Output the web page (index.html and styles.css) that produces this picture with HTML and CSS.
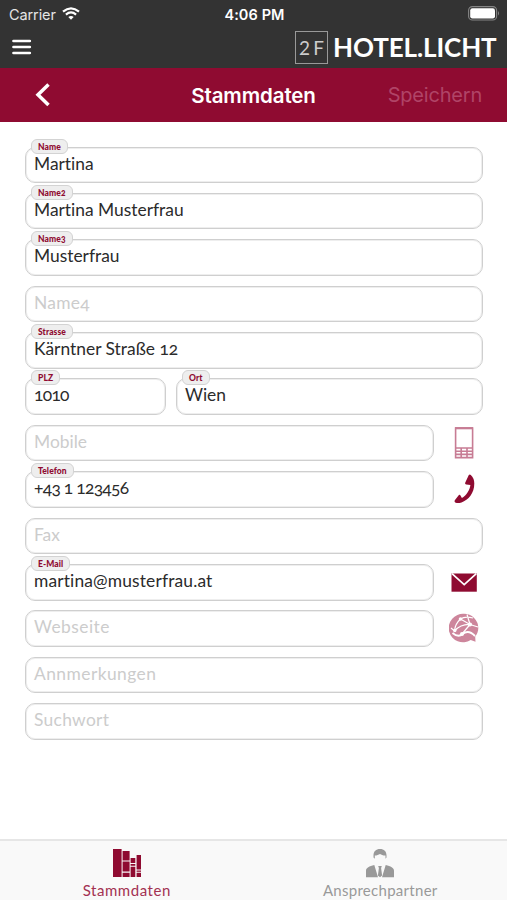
FILE: index.html
```html
<!DOCTYPE html>
<html lang="de">
<head>
<meta charset="utf-8">
<title>Stammdaten</title>
<link rel="stylesheet" href="styles.css">
</head>
<body>
<div class="app">
  <header class="top">
    <div class="status">
      <div class="carrier"><span>Carrier</span>
        <svg width="18" height="13" viewBox="0 0 18 13" fill="none" stroke="#fff" stroke-width="2.2"><path d="M1 4.7Q9-2 17 4.7M3.9 7.6q5.1-4.3 10.2 0"/><path d="M9 12.7 6.3 10q2.7-2.2 5.4 0z" fill="#fff" stroke="none"/></svg>
      </div>
      <span class="time">4:06 PM</span>
      <svg class="battery" width="32" height="15" viewBox="0 0 32 15"><rect x=".6" y=".6" width="28" height="13.4" rx="3.8" fill="none" stroke="#858585" stroke-width="1.1"/><rect x="2.2" y="2.2" width="24.8" height="10.2" rx="2.2" fill="#fff"/><path d="M30 5q2 2.3 0 4.6z" fill="#858585"/></svg>
    </div>
    <div class="brandbar">
      <svg width="22" height="17" viewBox="0 0 22 17" stroke="#fff" stroke-width="2.7" stroke-linecap="round"><path d="M2.500 2h16.300M2.500 8h16.300M2.500 14h16.300"/></svg>
      <div class="brand"><span class="mark">2 F</span><span class="brandname">HOTEL.LICHT</span></div>
    </div>
  </header>
  <nav class="nav">
    <svg width="18" height="24" viewBox="0 0 18 24" fill="none" stroke="#fff" stroke-width="3.500"><path d="M15.500 1.500 5 11.700l10.500 10.200"/></svg>
    <h1>Stammdaten</h1>
    <span class="save">Speichern</span>
  </nav>
  <main class="form">
    <div class="row"><div class="field"><b>Name</b><span>Martina</span></div></div>
    <div class="row"><div class="field"><b>Name2</b><span>Martina Musterfrau</span></div></div>
    <div class="row"><div class="field"><b>Name3</b><span>Musterfrau</span></div></div>
    <div class="row"><div class="field empty"><span class="mid">Name4</span></div></div>
    <div class="row"><div class="field"><b>Strasse</b><span>Kärntner Straße 12</span></div></div>
    <div class="row"><div class="field zip"><b>PLZ</b><span class="digits">1010</span></div><div class="field"><b>Ort</b><span>Wien</span></div></div>
    <div class="row"><div class="field empty"><span>Mobile</span></div>
      <div class="icon"><svg width="30" height="34" viewBox="0 0 30 34" fill="none" stroke="#c77c94" stroke-width="1.6"><path d="M6.6 2h17v29.6h-17zM6.6 22h17M6.6 25.3h17M6.6 28.4h17M12.2 22v9.6M18 22v9.6"/><path d="M6 2.2h18" stroke-width="2.2"/></svg></div></div>
    <div class="row"><div class="field"><b>Telefon</b><span class="digits">+43 1 123456</span></div>
      <div class="icon"><svg width="30" height="34" viewBox="0 0 30 34" fill="#8f0b31"><path d="M19.800 3q1-.8 2 0 3.500 3.300 3.500 8.500c0 9.600-5.800 16.500-12.800 18.900-2.500.9-5.900 1-6.700-.3-.5-.8-.1-1.700.6-2.500l3.300-4.400c.7-.7 1.300-.4 1.800.4l1.400 2.300c4.300-2.500 7.900-7.600 8.500-13l-4-.5c-1.200-.2-1.600-.9-1.100-1.900z"/></svg></div></div>
    <div class="row"><div class="field empty"><span>Fax</span></div></div>
    <div class="row"><div class="field"><b>E-Mail</b><span class="mail">martina@musterfrau.at</span></div>
      <div class="icon"><svg width="30" height="34" viewBox="0 0 30 34"><path d="M2.500 8.500h25.300v18.200H2.500z" fill="#8f0b31"/><path d="m3 8.700 12.200 11L27.300 8.700" fill="none" stroke="#fff" stroke-width="1.700"/></svg></div></div>
    <div class="row"><div class="field empty"><span class="wide">Webseite</span></div>
      <div class="icon"><svg width="30" height="34" viewBox="0 0 30 34"><path d="M15 2.800a14.300 14.300 0 0 1 14.300 14.300c0 3.500-1.300 6.200-3.100 8.500l.3 5.100-4.800-1.600A14.300 14.300 0 1 1 15 2.800z" fill="#cd869c"/><g fill="none" stroke="#fff" stroke-width="1.200"><path d="M11.500 8Q16 5 24 7M11.500 8Q6 13 5.500 20M11.500 8 21 13.500l8 2.500M21 13.500Q12 13 5.500 20L2 17M21 13.500 13 23M21 13.500l-3-10"/><path d="M3.500 22q6 5 10 1 6-5 12.500 2" stroke-width="1.900"/></g><g fill="#fff"><circle cx="11.500" cy="8" r="1.800"/><circle cx="21" cy="13.500" r="2.100"/><circle cx="5.800" cy="19.500" r="1.700"/><circle cx="13" cy="23" r="2"/></g></svg></div></div>
    <div class="row"><div class="field empty"><span class="wide">Annmerkungen</span></div></div>
    <div class="row"><div class="field empty"><span class="mid">Suchwort</span></div></div>
  </main>
  <footer class="tabs">
    <div class="tab active"><svg width="30" height="30" viewBox="0 0 30 30" fill="#8f0b31"><path d="M1 1h8.600v28H1zM10.600 3h7v9.500h-7zM10.600 13.600h7v10h-7zM10.600 24.700h7V29h-7zM18.600 10h4.700v5h-4.700zM18.600 16h4.700v1.800h-4.700zM18.600 18.800h4.700V29h-4.700zM24.600 7h4.400v14.500h-4.400zM24.600 24.800H29V29h-4.400z"/><path d="M24.600 22.500H29v1.300h-4.400z"/></svg><span>Stammdaten</span></div>
    <div class="tab"><svg width="30" height="30" viewBox="0 0 30 30" fill="#999"><path d="M8.500 9.500V7.300C8.500 3.300 11 1 15 1s6.500 2.300 6.500 6.300v2.200l-1 1.200V7.500c-3 0-4-.6-5.500-1.500-1.500.9-3 1.500-5.200 1.500v3.200zM1 29.200v-6.500c0-3.200 3.300-4.200 8.300-5.700L13 29.200zM29 29.200v-6.500c0-3.200-3.300-4.200-8.300-5.700L17 29.200z"/><path d="M13.200 18h3.600l-.7 2 1 7.500-2.100 1.700-2.100-1.700 1-7.500z"/></svg><span>Ansprechpartner</span></div>
  </footer>
</div>
</body>
</html>
```
FILE: styles.css
```css
* { box-sizing: border-box; }
body { margin: 0; background: #fff; font-family: Lato, sans-serif; font-variant-numeric: oldstyle-nums; font-variant-ligatures: none; }
svg { display: block; flex: none; }
.app { width: 507px; height: 900px; display: flex; flex-direction: column; overflow: hidden; }
.top { height: 68px; background: #333; color: #fff; font-family: Inter, sans-serif; font-variant-numeric: normal; }
.status { height: 28px; padding: 0 7px 0 9px; display: grid; grid-template-columns: 1fr auto 1fr; align-items: center; font-size: 14.500px; }
.carrier { display: flex; gap: 7px; align-items: center; color: #e5e5e5; letter-spacing: -.1px; }
.carrier svg { margin: -2px 0 0 -1px; }
.time { font-weight: 600; letter-spacing: .1px; }
.battery { justify-self: end; margin-top: -2px; }
.brandbar { height: 38px; padding: 0 11px; display: flex; justify-content: space-between; align-items: center; }
.brand { display: flex; align-items: center; gap: 5px; }
.mark { width: 33px; height: 33px; border: 1px solid #999; display: flex; align-items: center; justify-content: center; font-family: Lato, sans-serif; font-size: 19px; word-spacing: -1.500px; color: #ccc; white-space: nowrap; }
.brandname { font-family: Lato, sans-serif; font-size: 26px; font-weight: 700; width: 163px; letter-spacing: -.1px; white-space: nowrap; }
.nav { height: 54px; background: #8f0b31; color: #fff; display: grid; grid-template-columns: 1fr auto 1fr; align-items: center; padding: 0 25px; font-family: Inter, sans-serif; }
.nav svg { margin-left: 8px; }
.nav h1 { margin: 0; font-size: 20.500px; font-weight: 600; letter-spacing: -.1px; }
.save { justify-self: end; font-size: 20px; letter-spacing: -.2px; color: #b04467; }
.form { flex: 1; padding: 24.500px 24px 0 25px; }
.row { height: 46.400px; display: flex; gap: 10px; }
.field { position: relative; flex: 1; height: 36.500px; border: 1px solid #cfcfcf; box-shadow: inset 0 0 0 1px #eee; border-radius: 10px; padding-left: 8px; font-size: 17.400px; line-height: 32px; color: #2b2b2b; white-space: nowrap; }
.field b { position: absolute; left: 5px; top: -9px; height: 15px; padding: 0 6px; border: 1px solid #d3d3d3; border-radius: 6px; background: #eee; color: #8f0b31; font-size: 8.500px; line-height: 14px; font-weight: 900; letter-spacing: .1px; }
.field.empty { color: #ccc; }
.wide { letter-spacing: .45px; }
.mid { letter-spacing: .3px; }
.mail { letter-spacing: .15px; }
.digits { letter-spacing: -.7px; }
.zip { flex: 0 0 141px; }
.icon { width: 39px; flex: none; padding: 1px 0 0 5px; }
.icon svg { margin-left: -.5px; }
.tabs { height: 61px; border-top: 2px solid #e6e6e6; background: #f9f9f9; display: flex; }
.tab { flex: 1; display: flex; flex-direction: column; align-items: center; padding-top: 7px; font-size: 15px; letter-spacing: .28px; line-height: 24px; color: #999; }
.tab.active { color: #a33152; letter-spacing: .55px; }
```
